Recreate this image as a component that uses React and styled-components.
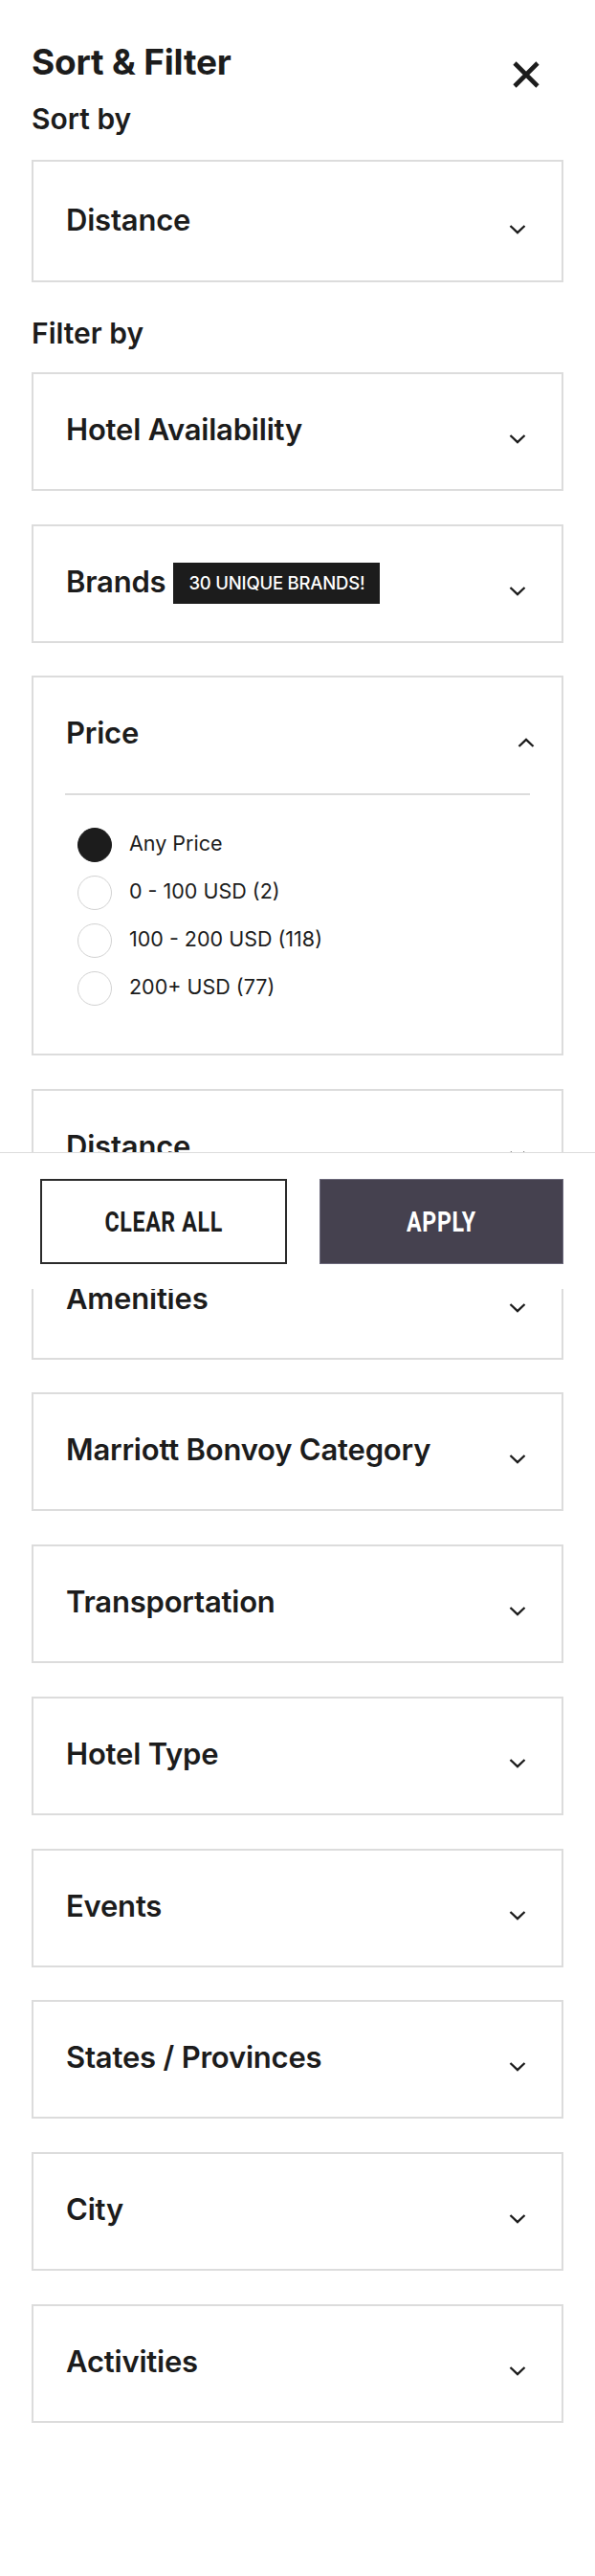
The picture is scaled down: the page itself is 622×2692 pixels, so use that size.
import React, { useState } from "react";
import styled, { createGlobalStyle } from "styled-components";

const GlobalStyle = createGlobalStyle`
  * {
    box-sizing: border-box;
  }

  body {
    margin: 0;
    background: #fff;
    color: #1c1c1c;
    font-family: Inter, "Noto Sans", sans-serif;
  }
`;

const FILTERS = [
  { name: "Hotel Availability" },
  { name: "Brands", badge: "30 UNIQUE BRANDS!" },
  {
    name: "Price",
    options: ["Any Price", "0 - 100 USD (2)", "100 - 200 USD (118)", "200+ USD (77)"],
  },
  { name: "Distance" },
  { name: "Amenities" },
  { name: "Marriott Bonvoy Category" },
  { name: "Transportation" },
  { name: "Hotel Type" },
  { name: "Events" },
  { name: "States / Provinces" },
  { name: "City" },
  { name: "Activities" },
];

function Chevron({ up }) {
  return (
    <ChevronIcon width="18" height="10" viewBox="0 0 18 10">
      <polyline
        points={up ? "1.5,9 9,1.8 16.5,9" : "1.5,1 9,8.2 16.5,1"}
        fill="none"
        stroke="#1c1c1c"
        strokeWidth="2.3"
      />
    </ChevronIcon>
  );
}

function FilterPanel({ filter, open, onToggle, selected, onSelect }) {
  return (
    <Panel>
      <PanelHeader $open={open} onClick={onToggle}>
        <LabelRow>
          <PanelLabel>{filter.name}</PanelLabel>
          {filter.badge && <Badge>{filter.badge}</Badge>}
        </LabelRow>
        <Chevron up={open} />
      </PanelHeader>
      {open && filter.options && (
        <>
          <Divider />
          <OptionList>
            {filter.options.map((opt) => (
              <OptionRow key={opt} onClick={() => onSelect(opt)}>
                <Radio $checked={selected === opt} />
                <OptionText>{opt}</OptionText>
              </OptionRow>
            ))}
          </OptionList>
        </>
      )}
    </Panel>
  );
}

export default function App() {
  const [openName, setOpenName] = useState("Price");
  const [price, setPrice] = useState("Any Price");

  return (
    <Page>
      <GlobalStyle />
      <Header>
        <Title>Sort &amp; Filter</Title>
        <CloseButton aria-label="Close">
          <svg width="30" height="30" viewBox="0 0 30 30">
            <path d="M3 3 L27 27 M27 3 L3 27" stroke="#1c1c1c" strokeWidth="4.6" />
          </svg>
        </CloseButton>
      </Header>

      <SectionLabel $top={19} $bottom={25}>Sort by</SectionLabel>
      <Panel>
        <PanelHeader $tall>
          <LabelRow>
            <PanelLabel>Distance</PanelLabel>
          </LabelRow>
          <Chevron />
        </PanelHeader>
      </Panel>

      <SectionLabel $top={35} $bottom={23}>Filter by</SectionLabel>
      <PanelList>
        {FILTERS.map((f) => (
          <FilterPanel
            key={f.name}
            filter={f}
            open={openName === f.name}
            onToggle={() => setOpenName(openName === f.name ? "" : f.name)}
            selected={price}
            onSelect={setPrice}
          />
        ))}
      </PanelList>

      <Footer>
        <FooterButton>
          <ButtonText>CLEAR ALL</ButtonText>
        </FooterButton>
        <FooterButton $primary>
          <ButtonText>APPLY</ButtonText>
        </FooterButton>
      </Footer>
    </Page>
  );
}

const Page = styled.div`
  position: relative;
  min-height: 100vh;
  padding: 43px 33px 0;
`;

const Header = styled.div`
  display: flex;
  justify-content: space-between;
  align-items: flex-start;
  height: 44px;
`;

const Title = styled.h1`
  margin: 0;
  font-size: 37px;
  line-height: 44px;
  font-weight: 700;
  letter-spacing: -0.2px;
`;

const CloseButton = styled.button`
  display: flex;
  width: 30px;
  height: 30px;
  margin: 20px 24px 0 0;
  padding: 0;
  border: none;
  background: none;
  cursor: pointer;
`;

const SectionLabel = styled.h2`
  margin: ${(p) => p.$top}px 0 ${(p) => p.$bottom}px;
  font-size: 30px;
  line-height: 36px;
  font-weight: 600;
`;

const PanelList = styled.div`
  display: flex;
  flex-direction: column;
  gap: 34.7px;
`;

const Panel = styled.div`
  border: 2px solid #dcdcdc;
  background: #fff;
`;

const PanelHeader = styled.div`
  display: flex;
  justify-content: space-between;
  align-items: flex-start;
  height: ${(p) => (p.$tall ? 124 : p.$open ? 121 : 120)}px;
  padding: ${(p) => (p.$tall ? 42 : 39)}px ${(p) => (p.$open ? 28 : 37)}px 0 34px;
  cursor: pointer;
`;

const LabelRow = styled.div`
  display: flex;
  align-items: flex-start;
  gap: 8px;
`;

const PanelLabel = styled.span`
  font-size: 31px;
  line-height: 38px;
  font-weight: 600;
  letter-spacing: -0.2px;
`;

const Badge = styled.span`
  display: flex;
  align-items: center;
  justify-content: center;
  width: 216px;
  height: 43px;
  margin-top: -1px;
  background: #1c1c1c;
  color: #fff;
  font-size: 18.5px;
  font-weight: 500;
  letter-spacing: -0.2px;
  white-space: nowrap;
`;

const ChevronIcon = styled.svg`
  flex-shrink: 0;
  margin-top: 24px;
`;

const Divider = styled.div`
  height: 2px;
  margin: 0 33px;
  background: #dcdcdc;
`;

const OptionList = styled.div`
  display: flex;
  flex-direction: column;
  padding: 27px 0 43px 46px;
`;

const OptionRow = styled.label`
  display: flex;
  align-items: center;
  gap: 18px;
  height: 50px;
  cursor: pointer;
`;

const Radio = styled.span`
  width: 36px;
  height: 36px;
  border-radius: 50%;
  border: 1.5px solid ${(p) => (p.$checked ? "#1c1c1c" : "#d2d2d2")};
  background: ${(p) => (p.$checked ? "#1c1c1c" : "#fff")};
`;

const OptionText = styled.span`
  font-size: 21.5px;
  line-height: 26px;
  margin-top: -4px;
`;

const Footer = styled.div`
  position: absolute;
  top: 1204px;
  left: 0;
  right: 0;
  height: 143px;
  display: flex;
  gap: 34px;
  padding: 27px 33px 0 42px;
  background: #fff;
  border-top: 1px solid #dddddd;
`;

const FooterButton = styled.button`
  flex: 1;
  height: 89px;
  display: flex;
  align-items: center;
  justify-content: center;
  border: ${(p) => (p.$primary ? "1px solid #6b687a" : "2px solid #2b2b2b")};
  background: ${(p) => (p.$primary ? "#45414f" : "#fff")};
  color: ${(p) => (p.$primary ? "#fff" : "#1c1c1c")};
  cursor: pointer;
`;

const ButtonText = styled.span`
  display: inline-block;
  font-family: Roboto, "Liberation Sans", sans-serif;
  font-size: 29px;
  font-weight: 700;
  letter-spacing: 0.8px;
  transform: scaleX(0.8);
`;
